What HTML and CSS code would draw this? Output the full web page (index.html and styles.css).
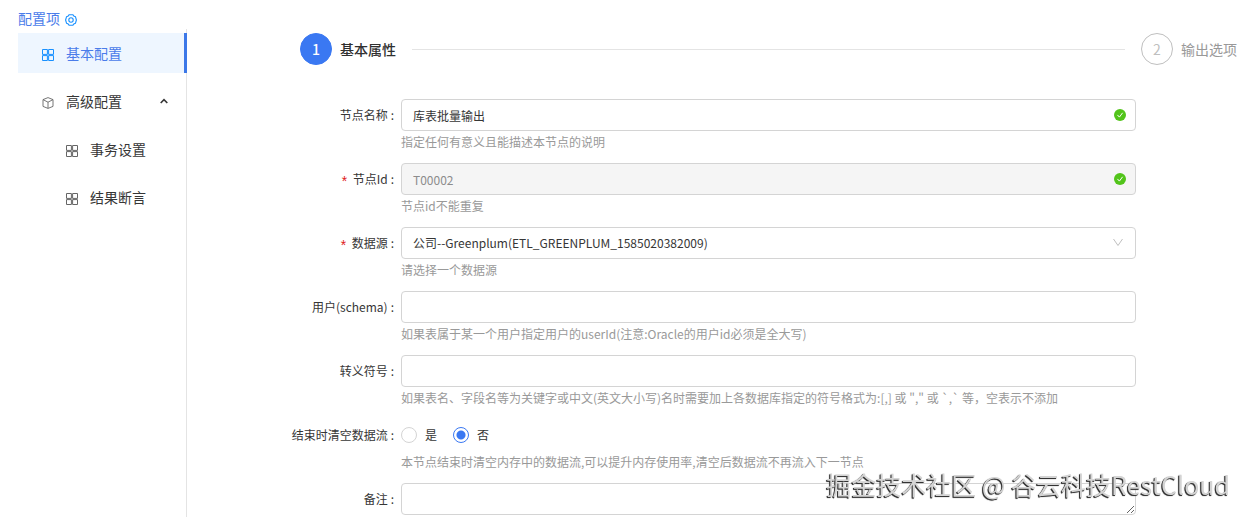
FILE: index.html
```html
<!DOCTYPE html>
<html lang="zh-CN">
<head>
<meta charset="utf-8">
<title>基本配置</title>
<link rel="stylesheet" href="styles.css">
</head>
<body>
<svg class="sprite" aria-hidden="true">
  <symbol id="grid" viewBox="0 0 12 12"><path d="M.5 .5h4.900v4.900H.5zM6.600 .5h4.900v4.900H6.600zM.5 6.600h4.900v4.900H.5zM6.600 6.600h4.900v4.900H6.600z" fill="none" stroke="currentColor"/></symbol>
  <symbol id="check" viewBox="0 0 12 12"><circle cx="6" cy="6" r="6" fill="#52c41a"/><path d="M3.400 5.900l2 2.200 3.200-4.300" fill="none" stroke="#fff"/></symbol>
</svg>
<div class="app">
  <aside class="sidebar">
    <h1 class="side-title">配置项
      <svg class="icon" viewBox="0 0 12 12" fill="none" stroke="currentColor" stroke-width="1.1"><path d="M4.2 .7h3.6l.9 1.2 1.8.9.9 3.2-.9 3.2-1.8.9-.9 1.2H4.2l-.9-1.2-1.8-.9L.6 6l.9-3.2 1.8-.9z" stroke-linejoin="round"/><circle cx="6" cy="6" r="2.2"/></svg>
    </h1>
    <nav class="menu">
      <a class="item active" href="#basic"><svg class="icon"><use href="#grid"/></svg>基本配置</a>
      <button class="item" type="button" aria-expanded="true">
        <svg class="icon" viewBox="0 0 12 12" fill="none" stroke="currentColor" stroke-width=".9" stroke-linejoin="round"><path d="M6 .6l5 2v6.800l-5 2-5-2V2.600zM1 2.600L6 5.200l5-2.600M6 5.200v6"/></svg>高级配置
        <svg class="arrow" viewBox="0 0 8 6" fill="none" stroke="currentColor" stroke-width="1.6"><path d="M.7 5L4 1.600 7.300 5"/></svg>
      </button>
      <a class="item sub" href="#transaction"><svg class="icon"><use href="#grid"/></svg>事务设置</a>
      <a class="item sub" href="#assert"><svg class="icon"><use href="#grid"/></svg>结果断言</a>
    </nav>
  </aside>
  <main class="main">
    <ol class="steps">
      <li class="step current"><span class="num">1</span>基本属性</li>
      <li class="line" aria-hidden="true"></li>
      <li class="step"><span class="num">2</span>输出选项</li>
    </ol>
    <form class="form">
      <div class="row">
        <label class="label" for="name">节点名称</label>
        <div class="control"><input class="field" id="name" type="text" value="库表批量输出"><svg class="suffix"><use href="#check"/></svg></div>
        <p class="help">指定任何有意义且能描述本节点的说明</p>
      </div>
      <div class="row">
        <label class="label required" for="nid">节点Id</label>
        <div class="control"><input class="field" id="nid" type="text" value="T00002" disabled><svg class="suffix"><use href="#check"/></svg></div>
        <p class="help">节点id不能重复</p>
      </div>
      <div class="row">
        <label class="label required" for="source">数据源</label>
        <div class="control"><select class="field" id="source"><option>公司--Greenplum(ETL_GREENPLUM_1585020382009)</option></select><svg class="suffix chevron" viewBox="0 0 12 12" fill="none" stroke="currentColor"><path d="M1.500 2L6 8.500 10.500 2"/></svg></div>
        <p class="help">请选择一个数据源</p>
      </div>
      <div class="row">
        <label class="label" for="schema">用户(schema)</label>
        <div class="control"><input class="field" id="schema" type="text"></div>
        <p class="help">如果表属于某一个用户指定用户的userId(注意:Oracle的用户id必须是全大写)</p>
      </div>
      <div class="row">
        <label class="label" for="escape">转义符号</label>
        <div class="control"><input class="field" id="escape" type="text"></div>
        <p class="help">如果表名、字段名等为关键字或中文(英文大小写)名时需要加上各数据库指定的符号格式为:[,] 或 "," 或 `,` 等，空表示不添加</p>
      </div>
      <div class="row" role="radiogroup" aria-labelledby="clear-label">
        <span class="label" id="clear-label">结束时清空数据流</span>
        <div class="control radios">
          <label class="choice"><input class="radio" type="radio" name="clear">是</label>
          <label class="choice"><input class="radio" type="radio" name="clear" checked>否</label>
        </div>
        <p class="help">本节点结束时清空内存中的数据流,可以提升内存使用率,清空后数据流不再流入下一节点</p>
      </div>
      <div class="row">
        <label class="label" for="remark">备注</label>
        <div class="control"><textarea class="field area" id="remark" rows="1"></textarea></div>
      </div>
    </form>
  </main>
</div>
<div class="watermark">掘金技术社区 @ 谷云科技RestCloud</div>
</body>
</html>
```
FILE: styles.css
```css
* { box-sizing: border-box; }
body {
  margin: 0;
  font: 12px/22px "Noto Sans CJK SC", sans-serif;
  color: #363636;
  background: #fff;
}
.sprite { position: absolute; width: 0; height: 0; }
.app { display: flex; height: 100vh; overflow: hidden; }
.sidebar {
  display: flex;
  flex-direction: column;
  flex: none;
  width: 187px;
  padding: 7px 0 0 18px;
}
.side-title {
  display: flex;
  align-items: center;
  gap: 5px;
  margin: 0;
  font-size: 14px;
  font-weight: 400;
  color: #4a7cea;
}
.icon { flex: none; width: 12px; height: 12px; margin-top: 4px; }
.side-title .icon { color: #1890ff; }
.menu {
  display: flex;
  flex-direction: column;
  flex: 1;
  gap: 8px;
  padding-top: 4px;
  border-right: 1px solid #e4e4e4;
}
.item {
  display: flex;
  align-items: center;
  gap: 12px;
  height: 40px;
  padding: 0 18px 0 24px;
  border: 0;
  background: none;
  font: inherit;
  font-size: 14px;
  color: #363636;
  text-align: left;
  text-decoration: none;
}
.item .icon { color: #666; }
.item.sub { padding-left: 48px; }
.item.active {
  margin-right: -1px;
  border-right: 3px solid #3c78e8;
  background: #eef6ff;
  color: #4a7cea;
}
.item.active .icon { color: #1890ff; }
.arrow { width: 8px; height: 6px; margin-left: auto; }
.main { flex: 1; min-width: 0; padding-top: 33px; }
.steps {
  display: flex;
  align-items: center;
  gap: 16px;
  margin: 0 9px 34px 113px;
  padding: 0;
  list-style: none;
}
.step {
  display: flex;
  align-items: center;
  gap: 8px;
  font-size: 14px;
  color: #999;
}
.num {
  display: grid;
  place-items: center;
  width: 32px;
  height: 32px;
  border: 1px solid #bfbfbf;
  border-radius: 50%;
  color: #bfbfbf;
}
.current { font-weight: 500; color: #303030; }
.current .num { border-color: #3a78f2; background: #3a78f2; color: #fff; }
.line { flex: 1; height: 1px; background: #e4e4e4; }
.form {
  display: grid;
  gap: 10px;
  margin: 0 110px 0 14px;
}
.row {
  display: grid;
  grid-template-columns: 193px minmax(0, 1fr);
  column-gap: 7px;
}
.label { line-height: 32px; text-align: right; white-space: nowrap; }
.label::after { content: ":"; margin-left: 3px; }
.required::before {
  content: "*";
  margin-right: 4px;
  font-family: "Liberation Mono", monospace;
  font-size: 14px;
  line-height: 1;
  vertical-align: -3px;
  color: #e02020;
}
.control { position: relative; display: flex; height: 32px; }
.field {
  width: 100%;
  height: 32px;
  padding: 0 30px 0 11px;
  border: 1px solid #d4d4d4;
  border-radius: 4px;
  background: #fff;
  font: inherit;
  color: #363636;
  appearance: none;
}
.field:disabled { background: #f5f5f5; color: #8c8c8c; opacity: 1; }
.area { min-height: 32px; resize: vertical; }
.suffix {
  position: absolute;
  top: 10px;
  right: 10px;
  width: 12px;
  height: 12px;
  pointer-events: none;
}
.chevron { right: 12px; color: #bfbfbf; }
.help {
  grid-column: 2;
  margin: 0;
  color: #999;
  white-space: nowrap;
}
.radios { align-items: center; gap: 16px; }
.choice { display: flex; align-items: center; gap: 8px; }
.radio {
  width: 16px;
  height: 16px;
  margin: 0;
  border: 1px solid #d4d4d4;
  border-radius: 50%;
  background: #fff;
  appearance: none;
}
.radio:checked {
  border-color: #3a78f2;
  background: radial-gradient(circle, #3a78f2 4px, #fff 5px);
}
.watermark {
  position: fixed;
  right: 16px;
  bottom: 17px;
  font-size: 25px;
  line-height: 32px;
  color: #d4d4d4;
  text-shadow: -1px 1px 1px #333, -1px 1px 0 #444;
  white-space: nowrap;
  pointer-events: none;
}
```
